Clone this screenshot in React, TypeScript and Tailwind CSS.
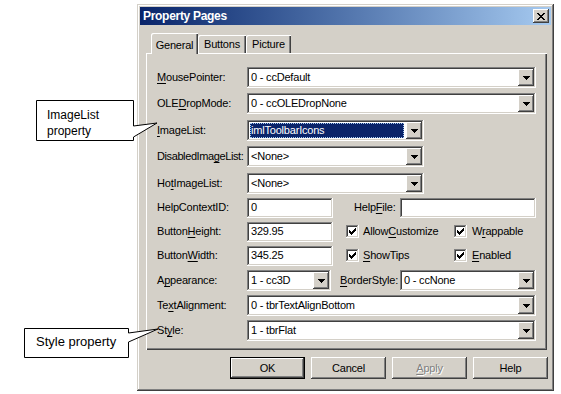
import type { ReactNode } from "react";

/* classic win2k bevels */
const raised =
  "shadow-[inset_-1px_-1px_#404040,inset_1px_1px_#ffffff,inset_-2px_-2px_#808080,inset_2px_2px_#d4d0c8]";
const sunken =
  "shadow-[inset_-1px_-1px_#ffffff,inset_1px_1px_#808080,inset_-2px_-2px_#d4d0c8,inset_2px_2px_#404040]";

function U({ children }: { children: ReactNode }) {
  return <span className="underline underline-offset-[2px] decoration-1">{children}</span>;
}

function DownArrow() {
  return (
    <svg width="7" height="4" viewBox="0 0 7 4" shapeRendering="crispEdges">
      <path d="M0 0h7v1h-1v1h-1v1h-1v1h-1v-1h-1v-1h-1v-1h-1z" fill="#000" />
    </svg>
  );
}

function DropButton() {
  return (
    <div className={`w-[16px] h-[17px] shrink-0 bg-[#d4d0c8] flex items-center justify-center ${raised}`}>
      <DownArrow />
    </div>
  );
}

function Combo({ value, w, selected }: { value: string; w: string; selected?: boolean }) {
  return (
    <div className={`${w} h-[21px] shrink-0 bg-white flex p-[2px] ${sunken}`}>
      {selected ? (
        <div className="flex-1 flex items-center pr-[2px]">
          <div className="flex-1 h-[15px] ml-px bg-[#0a246a] text-white flex items-center pl-[1px] outline-1 outline-dotted outline-[#a6caf0] -outline-offset-1">
            {value}
          </div>
        </div>
      ) : (
        <div className="flex-1 flex items-center pl-[2px]">{value}</div>
      )}
      <DropButton />
    </div>
  );
}

function TextBox({ value, w }: { value: string; w: string }) {
  return (
    <div className={`${w} h-[20px] shrink-0 bg-white flex items-center pl-[4px] ${sunken}`}>{value}</div>
  );
}

function Check() {
  return (
    <div className={`w-[13px] h-[13px] shrink-0 bg-white flex items-center justify-center ${sunken}`}>
      <svg width="7" height="7" viewBox="0 0 7 7" shapeRendering="crispEdges">
        <path d="M0 2h1v1h1v1h1v-1h1v-1h1v-1h1v-1h1v3h-1v1h-1v1h-1v1h-1v1h-1v-1h-1v-1h-1z" fill="#000" />
      </svg>
    </div>
  );
}

function Label({ children, w = "w-[90px]" }: { children: ReactNode; w?: string }) {
  return <div className={`${w} shrink-0 whitespace-nowrap`}>{children}</div>;
}

function Row({ children, mt }: { children: ReactNode; mt: string }) {
  return <div className={`flex items-center h-[21px] ${mt}`}>{children}</div>;
}

function Btn({ children, isDefault }: { children: ReactNode; isDefault?: boolean }) {
  return (
    <div
      className={`w-[75px] h-[22px] flex items-center justify-center bg-[#d4d0c8] ${
        isDefault ? "outline-1 outline-black -outline-offset-1 p-px" : ""
      }`}
    >
      <div className={`w-full h-full flex items-center justify-center ${raised}`}>{children}</div>
    </div>
  );
}

export default function App() {
  return (
    <div className="relative w-[561px] h-[394px] bg-white overflow-hidden font-['Liberation_Sans',Arial,sans-serif] text-[11px] text-black">
      <div className="pt-[4px] pl-[137px]">
        {/* ================= DIALOG ================= */}
        <div
          className={`w-[417px] h-[387px] bg-[#d4d0c8] p-[3px] flex flex-col tracking-[-0.2px] shadow-[inset_-1px_-1px_#404040,inset_1px_1px_#d4d0c8,inset_-2px_-2px_#808080,inset_2px_2px_#ffffff]`}
        >
          {/* title */}
          <div className="h-[18px] flex items-center justify-between pl-[3px] pr-[2px] bg-linear-to-r from-[#0a246a] to-[#a6caf0]">
            <span className="text-white font-bold text-[12px] tracking-[-0.3px]">Property Pages</span>
            <div className={`w-[16px] h-[14px] bg-[#d4d0c8] flex items-center justify-center ${raised}`}>
              <svg width="8" height="7" viewBox="0 0 8 7" shapeRendering="crispEdges">
                <path
                  d="M0 0h2v1h1v1h2v-1h1v-1h2v1h-1v1h-1v1h-1v1h1v1h1v1h1v1h-2v-1h-1v-1h-2v1h-1v1h-2v-1h1v-1h1v-1h1v-1h-1v-1h-1v-1h-1z"
                  fill="#000"
                />
              </svg>
            </div>
          </div>

          {/* tabs */}
          <div className="mt-[8px] h-[20px] flex items-end pl-[11px]">
            <div className="relative z-10 w-[47px] h-[21px] -mb-px bg-[#d4d0c8] rounded-tl-[2px] flex items-start justify-center pt-[4px] shadow-[inset_1px_1px_#ffffff,inset_-1px_0_#404040,inset_-2px_0_#808080]">
              General
            </div>
            <div className="w-[48px] h-[18px] flex items-center justify-center rounded-tl-[2px] shadow-[inset_1px_1px_#ffffff,inset_-1px_0_#404040,inset_-2px_0_#808080]">
              Buttons
            </div>
            <div className="w-[45px] h-[18px] flex items-center justify-center rounded-tl-[2px] shadow-[inset_1px_1px_#ffffff,inset_-1px_0_#404040,inset_-2px_0_#808080]">
              Picture
            </div>
          </div>

          {/* panel */}
          <div className="ml-[6px] w-[401px] h-[297px] flex flex-col pt-[14px] pl-[11px] pr-[11px] shadow-[inset_1px_1px_#ffffff,inset_-1px_-1px_#404040,inset_-2px_-2px_#808080]">
            <Row mt="mt-0">
              <Label>
                <U>M</U>ousePointer:
              </Label>
              <Combo w="flex-1" value="0 - ccDefault" />
            </Row>
            <Row mt="mt-[5px]">
              <Label>
                OLE<U>D</U>ropMode:
              </Label>
              <Combo w="flex-1" value="0 - ccOLEDropNone" />
            </Row>
            <Row mt="mt-[6px]">
              <Label>
                <U>I</U>mageList:
              </Label>
              <Combo w="w-[177px]" value="imlToolbarIcons" selected />
            </Row>
            <Row mt="mt-[5px]">
              <Label>
                <span className="tracking-[-0.4px]">
                  DisabledIma<U>g</U>eList:
                </span>
              </Label>
              <Combo w="w-[177px]" value="<None>" />
            </Row>
            <Row mt="mt-[6px]">
              <Label>
                Ho<U>t</U>ImageList:
              </Label>
              <Combo w="w-[177px]" value="<None>" />
            </Row>
            <Row mt="mt-[3px]">
              <Label>HelpContextID:</Label>
              <TextBox w="w-[86px]" value="0" />
              <div className="ml-[21px] w-[46px] shrink-0">
                Help<U>F</U>ile:
              </div>
              <TextBox w="flex-1" value="" />
            </Row>
            <Row mt="mt-[3px]">
              <Label>
                Button<U>H</U>eight:
              </Label>
              <TextBox w="w-[86px]" value="329.95" />
              <div className="ml-[13px] w-[108px] shrink-0 flex items-center gap-[4px]">
                <Check />
                <span>
                  Allow<U>C</U>ustomize
                </span>
              </div>
              <div className="flex items-center gap-[5px]">
                <Check />
                <span>
                  W<U>r</U>appable
                </span>
              </div>
            </Row>
            <Row mt="mt-[3px]">
              <Label>
                Button<U>W</U>idth:
              </Label>
              <TextBox w="w-[86px]" value="345.25" />
              <div className="ml-[13px] w-[108px] shrink-0 flex items-center gap-[4px]">
                <Check />
                <span>
                  <U>S</U>howTips
                </span>
              </div>
              <div className="flex items-center gap-[5px]">
                <Check />
                <span>
                  <U>E</U>nabled
                </span>
              </div>
            </Row>
            <Row mt="mt-[4px]">
              <Label>
                A<U>p</U>pearance:
              </Label>
              <Combo w="w-[84px]" value="1 - cc3D" />
              <div className="ml-[9px] w-[60px] shrink-0 whitespace-nowrap">
                <U>B</U>orderStyle:
              </div>
              <Combo w="flex-1" value="0 - ccNone" />
            </Row>
            <Row mt="mt-[4px]">
              <Label>
                Te<U>x</U>tAlignment:
              </Label>
              <Combo w="flex-1" value="0 - tbrTextAlignBottom" />
            </Row>
            <Row mt="mt-[4px]">
              <Label>
                St<U>y</U>le:
              </Label>
              <Combo w="flex-1" value="1 - tbrFlat" />
            </Row>
          </div>

          {/* buttons */}
          <div className="mt-[7px] flex gap-[6px] pl-[90px]">
            <Btn isDefault>OK</Btn>
            <Btn>Cancel</Btn>
            <Btn>
              <span className="text-[#808080] [text-shadow:1px_1px_#ffffff]">
                <U>A</U>pply
              </span>
            </Btn>
            <Btn>Help</Btn>
          </div>
        </div>
      </div>

      {/* ================= CALLOUTS ================= */}
      <svg className="absolute inset-0 pointer-events-none" width="561" height="394" viewBox="0 0 561 394">
        <path
          d="M36.5 100.5H133.5V126L157 123L133.5 137V140.5H36.5Z"
          fill="#fff"
          stroke="#000"
          strokeWidth="1"
        />
        <path
          d="M24.5 328.5H128.5V333L158 329L128.5 342V357.5H24.5Z"
          fill="#fff"
          stroke="#000"
          strokeWidth="1"
        />
      </svg>
      <div className="absolute left-[47px] top-[107px] text-[12px] leading-[16px]">
        ImageList
        <br />
        property
      </div>
      <div className="absolute left-[36px] top-[334px] text-[13px] leading-[16px]">Style property</div>
    </div>
  );
}
